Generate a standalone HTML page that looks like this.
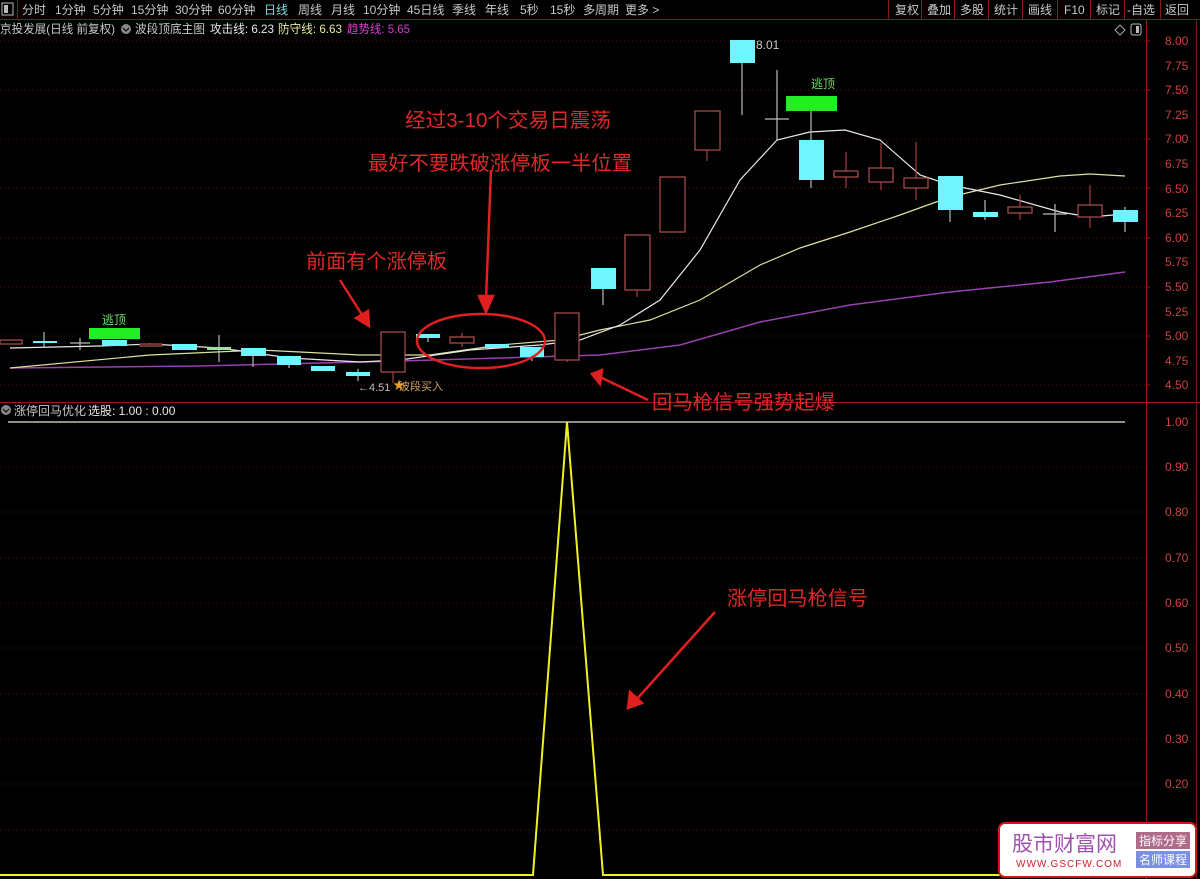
<!DOCTYPE html>
<html><head><meta charset="utf-8"><style>
html,body{margin:0;padding:0;background:#000;width:1200px;height:879px;overflow:hidden}
body{font-family:"Liberation Sans","Noto Sans CJK SC",sans-serif;position:relative}
svg text{font-family:"Liberation Sans","Noto Sans CJK SC",sans-serif}
</style></head><body>
<svg width="1200" height="879" viewBox="0 0 1200 879" xmlns="http://www.w3.org/2000/svg">
<rect width="1200" height="879" fill="#000"/>
<line x1="0" y1="19.5" x2="1200" y2="19.5" stroke="#8a1a1a"/>
<rect x="2" y="3" width="11" height="12" fill="none" stroke="#bbb"/><rect x="4" y="5" width="4" height="8" fill="#bbb"/>
<line x1="17.5" y1="0" x2="17.5" y2="19" stroke="#8a1a1a"/>
<g font-size="12" fill="#c8c8c8">
<text x="22" y="14">分时</text><text x="55" y="14">1分钟</text><text x="93" y="14">5分钟</text><text x="131" y="14">15分钟</text><text x="175" y="14">30分钟</text><text x="218" y="14">60分钟</text>
<text x="264" y="14" fill="#7fd8e0">日线</text><text x="298" y="14">周线</text><text x="331" y="14">月线</text><text x="363" y="14">10分钟</text><text x="407" y="14">45日线</text><text x="452" y="14">季线</text><text x="485" y="14">年线</text><text x="520" y="14">5秒</text><text x="550" y="14">15秒</text><text x="583" y="14">多周期</text><text x="625" y="14">更多 &gt;</text>
<text x="895" y="14">复权</text><text x="927" y="14">叠加</text><text x="960" y="14">多股</text><text x="994" y="14">统计</text><text x="1028" y="14">画线</text><text x="1064" y="14">F10</text><text x="1096" y="14">标记</text><text x="1127" y="14">-自选</text><text x="1165" y="14">返回</text>
</g>
<g stroke="#8a1a1a"><line x1="888.5" y1="0" x2="888.5" y2="19"/><line x1="921.5" y1="0" x2="921.5" y2="19"/><line x1="954.5" y1="0" x2="954.5" y2="19"/><line x1="988.5" y1="0" x2="988.5" y2="19"/><line x1="1022.5" y1="0" x2="1022.5" y2="19"/><line x1="1057.5" y1="0" x2="1057.5" y2="19"/><line x1="1090.5" y1="0" x2="1090.5" y2="19"/><line x1="1124.5" y1="0" x2="1124.5" y2="19"/><line x1="1160.5" y1="0" x2="1160.5" y2="19"/></g>
<g font-size="12">
<text x="0" y="33" fill="#c8c8c8" textLength="115" lengthAdjust="spacingAndGlyphs">京投发展(日线 前复权)</text>
<circle cx="126" cy="29" r="5" fill="#888"/><path d="M123 28 L126 31 L129 28" stroke="#000" fill="none"/>
<text x="135" y="33" fill="#c8c8c8" textLength="70" lengthAdjust="spacingAndGlyphs">波段顶底主图</text>
<text x="210" y="33" fill="#e8e8e8" textLength="64" lengthAdjust="spacingAndGlyphs">攻击线: 6.23</text>
<text x="278" y="33" fill="#e8e8a0" textLength="64" lengthAdjust="spacingAndGlyphs">防守线: 6.63</text>
<text x="347" y="33" fill="#d040d0" textLength="63" lengthAdjust="spacingAndGlyphs">趋势线: 5.65</text>
</g>
<path d="M1120 25 L1125 30 L1120 35 L1115 30 Z" fill="none" stroke="#aaa"/>
<rect x="1131" y="24" width="10" height="11" rx="2" fill="none" stroke="#bbb"/><rect x="1136" y="26" width="3" height="7" fill="#bbb"/>
<line x1="1146.5" y1="20" x2="1146.5" y2="879" stroke="#9a1a1a"/>
<line x1="0" y1="402.5" x2="1200" y2="402.5" stroke="#9a1a1a"/>
<line x1="1196.5" y1="20" x2="1196.5" y2="879" stroke="#6a1a1a"/>
<g stroke="#5a1414" stroke-dasharray="1 3">
<line x1="0" y1="41" x2="1146" y2="41"/><line x1="0" y1="90" x2="1146" y2="90"/><line x1="0" y1="139" x2="1146" y2="139"/><line x1="0" y1="188" x2="1146" y2="188"/><line x1="0" y1="238" x2="1146" y2="238"/><line x1="0" y1="287" x2="1146" y2="287"/><line x1="0" y1="336" x2="1146" y2="336"/><line x1="0" y1="385" x2="1146" y2="385"/>
<line x1="0" y1="467" x2="1146" y2="467"/><line x1="0" y1="512" x2="1146" y2="512"/><line x1="0" y1="558" x2="1146" y2="558"/><line x1="0" y1="603" x2="1146" y2="603"/><line x1="0" y1="648" x2="1146" y2="648"/><line x1="0" y1="694" x2="1146" y2="694"/><line x1="0" y1="739" x2="1146" y2="739"/><line x1="0" y1="784" x2="1146" y2="784"/><line x1="0" y1="830" x2="1146" y2="830"/>
</g>
<g font-size="12" fill="#d04040">
<text x="1165" y="45">8.00</text><text x="1165" y="70">7.75</text><text x="1165" y="94">7.50</text><text x="1165" y="119">7.25</text><text x="1165" y="143">7.00</text><text x="1165" y="168">6.75</text><text x="1165" y="193">6.50</text><text x="1165" y="217">6.25</text><text x="1165" y="242">6.00</text><text x="1165" y="266">5.75</text><text x="1165" y="291">5.50</text><text x="1165" y="316">5.25</text><text x="1165" y="340">5.00</text><text x="1165" y="365">4.75</text><text x="1165" y="389">4.50</text>
<text x="1165" y="426">1.00</text><text x="1165" y="471">0.90</text><text x="1165" y="516">0.80</text><text x="1165" y="562">0.70</text><text x="1165" y="607">0.60</text><text x="1165" y="652">0.50</text><text x="1165" y="698">0.40</text><text x="1165" y="743">0.30</text><text x="1165" y="788">0.20</text>
</g>
<g stroke="#9a1a1a"><line x1="1146" y1="41" x2="1150" y2="41"/><line x1="1146" y1="90" x2="1150" y2="90"/><line x1="1146" y1="139" x2="1150" y2="139"/><line x1="1146" y1="188" x2="1150" y2="188"/><line x1="1146" y1="238" x2="1150" y2="238"/><line x1="1146" y1="287" x2="1150" y2="287"/><line x1="1146" y1="336" x2="1150" y2="336"/><line x1="1146" y1="385" x2="1150" y2="385"/></g>
<polyline fill="none" stroke="#9a40b0" stroke-width="1.5" points="10,368 200,366 400,361 500,358 600,355 680,345 760,322 850,305 950,292 1050,282 1125,272"/>
<polyline fill="none" stroke="#e0e0a0" stroke-width="1.2" points="10,368 150,355 260,350 360,355 430,355 500,345 560,340 600,330 650,320 700,300 760,265 800,248 850,232 900,215 950,197 1000,185 1060,176 1090,174 1125,176"/>
<polyline fill="none" stroke="#e8e8e8" stroke-width="1.2" points="10,348 100,346 150,344 220,348 290,358 360,362 400,360 470,350 540,345 580,340 620,325 660,300 700,250 740,180 777,140 810,132 845,130 880,140 920,175 950,185 1000,195 1060,212 1090,217 1125,214"/>
<g stroke-width="1.2">
<g stroke="#a04040"><line x1="462" y1="333" x2="462" y2="347"/><line x1="393" y1="372" x2="393" y2="383"/><line x1="567" y1="360" x2="567" y2="362"/><line x1="637" y1="290" x2="637" y2="297"/><line x1="707" y1="150" x2="707" y2="161"/><line x1="846" y1="152" x2="846" y2="188"/><line x1="881" y1="143" x2="881" y2="190"/><line x1="916" y1="142" x2="916" y2="200"/><line x1="1020" y1="195" x2="1020" y2="220"/><line x1="1090" y1="185" x2="1090" y2="228"/></g>
<g stroke="#bbb"><line x1="44" y1="332" x2="44" y2="348"/><line x1="80" y1="338" x2="80" y2="350"/><line x1="219" y1="335" x2="219" y2="362"/><line x1="253" y1="356" x2="253" y2="367"/><line x1="289" y1="365" x2="289" y2="368"/><line x1="358" y1="369" x2="358" y2="381"/><line x1="428" y1="338" x2="428" y2="342"/><line x1="532" y1="357" x2="532" y2="361"/><line x1="603" y1="289" x2="603" y2="305"/><line x1="742" y1="63" x2="742" y2="115"/><line x1="777" y1="70" x2="777" y2="140"/><line x1="811" y1="111" x2="811" y2="188"/><line x1="950" y1="210" x2="950" y2="222"/><line x1="985" y1="200" x2="985" y2="220"/><line x1="1055" y1="204" x2="1055" y2="232"/><line x1="1125" y1="207" x2="1125" y2="232"/><line x1="70" y1="343" x2="90" y2="343"/><line x1="765" y1="119" x2="789" y2="119"/><line x1="1043" y1="214" x2="1067" y2="214"/><line x1="208" y1="349" x2="230" y2="349"/></g>
</g>
<g fill="#000" stroke="#b05050" stroke-width="1.2">
<rect x="0" y="340" width="22" height="4"/><rect x="140" y="344" width="22" height="2"/><rect x="450" y="337" width="24" height="6"/><rect x="381" y="332" width="24" height="40"/><rect x="555" y="313" width="24" height="47"/><rect x="625" y="235" width="25" height="55"/><rect x="660" y="177" width="25" height="55"/><rect x="695" y="111" width="25" height="39"/><rect x="834" y="171" width="24" height="6"/><rect x="869" y="168" width="24" height="14"/><rect x="904" y="178" width="24" height="10"/><rect x="1008" y="207" width="24" height="6"/><rect x="1078" y="205" width="24" height="12"/>
</g>
<g fill="#6ff5ff">
<rect x="33" y="341" width="24" height="2"/><rect x="102" y="340" width="25" height="6"/><rect x="172" y="344" width="25" height="6"/><rect x="207" y="347" width="24" height="3" fill="#a0e0a0"/><rect x="241" y="348" width="25" height="8"/><rect x="277" y="356" width="24" height="9"/><rect x="311" y="366" width="24" height="5"/><rect x="346" y="372" width="24" height="4"/><rect x="416" y="334" width="24" height="4"/><rect x="485" y="344" width="24" height="4"/><rect x="520" y="347" width="24" height="10"/><rect x="591" y="268" width="25" height="21"/><rect x="730" y="40" width="25" height="23"/><rect x="799" y="140" width="25" height="40"/><rect x="938" y="176" width="25" height="34"/><rect x="973" y="212" width="25" height="5"/><rect x="1113" y="210" width="25" height="12"/>
</g>
<rect x="89" y="328" width="51" height="11" fill="#22ee22"/><text x="114" y="324" font-size="12" fill="#66dd66" text-anchor="middle">逃顶</text>
<rect x="786" y="96" width="51" height="15" fill="#22ee22"/><text x="823" y="88" font-size="12" fill="#66dd66" text-anchor="middle">逃顶</text>
<text x="756" y="49" font-size="12" fill="#ccc">8.01</text>
<text x="358" y="391" font-size="11" fill="#bbb">←4.51</text><text x="393" y="389" font-size="12" fill="#f0a020">★</text><text x="399" y="390" font-size="11" fill="#d0a070">波段买入</text>
<g font-size="20" fill="#e02828">
<text x="405" y="127" textLength="206" lengthAdjust="spacingAndGlyphs">经过3-10个交易日震荡</text>
<text x="368" y="170" textLength="264" lengthAdjust="spacingAndGlyphs">最好不要跌破涨停板一半位置</text>
<text x="306" y="268" textLength="141" lengthAdjust="spacingAndGlyphs">前面有个涨停板</text>
<text x="652" y="409" textLength="183" lengthAdjust="spacingAndGlyphs">回马枪信号强势起爆</text>
<text x="727" y="605" textLength="141" lengthAdjust="spacingAndGlyphs">涨停回马枪信号</text>
</g>
<ellipse cx="481" cy="341" rx="64" ry="27" fill="none" stroke="#e02020" stroke-width="2.5"/>
<g stroke="#e02020" stroke-width="2.5" fill="#e02020">
<line x1="491" y1="170" x2="486" y2="300"/><path d="M479 296 L486 312 L493 296 Z"/>
<line x1="340" y1="280" x2="364" y2="318"/><path d="M356 318 L369 326 L368 311 Z"/>
<line x1="648" y1="400" x2="602" y2="378"/><path d="M602 370 L592 374 L600 384 Z"/>
<line x1="715" y1="612" x2="636" y2="700"/><path d="M630 692 L628 708 L642 703 Z"/>
</g>
<circle cx="6" cy="410" r="5" fill="#888"/><path d="M3 409 L6 412 L9 409" stroke="#000" fill="none"/>
<text x="14" y="415" font-size="12" fill="#c8c8c8">涨停回马优化</text>
<text x="88" y="415" font-size="12" fill="#e8e8e8">选股: 1.00 : 0.00</text>
<line x1="8" y1="422" x2="1125" y2="422" stroke="#e8e8d0" stroke-width="1.2"/>
<polyline fill="none" stroke="#f0f020" stroke-width="2" points="0,875 533,875 567,422 603,875 1000,875"/>
<rect x="999" y="823" width="197" height="54" rx="6" fill="#fff" stroke="#d01818" stroke-width="2"/>
<text x="1012" y="851" font-size="21" fill="#a050b0" font-family="'Noto Serif CJK SC',serif">股市财富网</text>
<text x="1016" y="867" font-size="10" fill="#d02030" font-family="'Liberation Serif',serif" letter-spacing="1">WWW.GSCFW.COM</text>
<rect x="1136" y="832" width="54" height="17" fill="#b06a8a"/><text x="1163" y="845" font-size="12" fill="#fff" text-anchor="middle">指标分享</text>
<rect x="1136" y="851" width="54" height="17" fill="#7a90e0"/><text x="1163" y="864" font-size="12" fill="#fff" text-anchor="middle">名师课程</text>
</svg>
</body></html>
